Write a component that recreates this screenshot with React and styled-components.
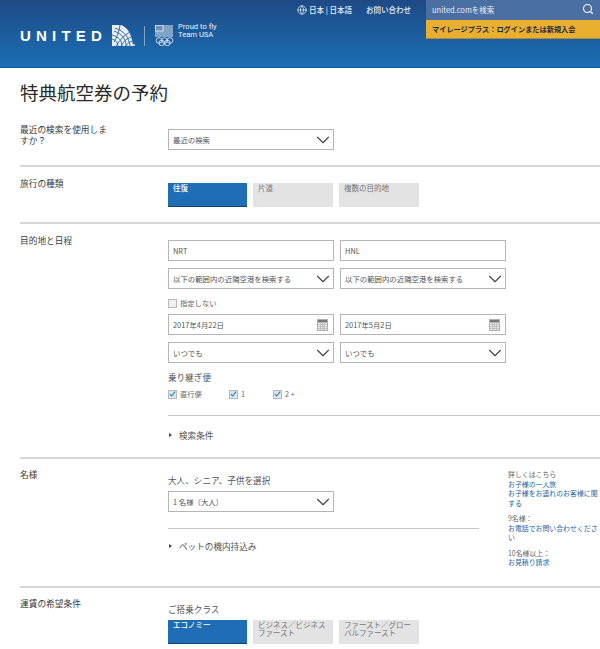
import React from "react";
import styled, { createGlobalStyle } from "styled-components";
import { ChevronDown, Search, Globe } from "lucide-react";

const GlobalStyle = createGlobalStyle`
    html, body {
        margin: 0;
        padding: 0;
        background: #fff;
    }
    body {
        font-family: "Noto Sans CJK JP", "Open Sans", sans-serif;
        color: #333;
        overflow: hidden;
    }
    * {
        box-sizing: border-box;
    }
`;

const Page = styled.div`
    width: 600px;
    height: 649px;
    overflow: hidden;
`;

const Header = styled.header`
    height: 68px;
    background: linear-gradient(180deg, #1e4a85 0%, #1b6fb5 100%);
    border-bottom: 1px solid #14598f;
    display: flex;
    justify-content: space-between;
    color: #fff;
`;

const LogoArea = styled.div`
    display: flex;
    align-items: center;
    padding: 25px 0 0 20px;
    height: 46px;
`;

const Wordmark = styled.div`
    font-family: "Liberation Sans", sans-serif;
    font-weight: 700;
    font-size: 15px;
    letter-spacing: 5.2px;
    margin-right: 5px;
    line-height: 16px;
`;

const LogoDivider = styled.div`
    width: 1px;
    height: 20px;
    background: #7fa3c9;
    margin: 0 10px 0 9px;
`;

const Tagline = styled.div`
    font-family: "Roboto", sans-serif;
    font-size: 7.6px;
    line-height: 7.6px;
    margin: -9px 0 0 4px;
    color: #eef3f9;
`;

const TopRight = styled.div`
    display: flex;
`;

const TopNav = styled.nav`
    display: flex;
    align-items: center;
    height: 19px;
    font-size: 7.5px;
    font-weight: 500;
    gap: 14px;
    margin-right: 15px;
    color: #e8eef6;
`;

const NavLocale = styled.span`
    display: flex;
    align-items: center;
    gap: 2px;
`;

const AccountBox = styled.div`
    width: 174px;
    display: flex;
    flex-direction: column;
`;

const SearchBar = styled.div`
    height: 20px;
    background: #4a6fa3;
    display: flex;
    align-items: center;
    justify-content: space-between;
    padding: 0 6px 2px 6px;
    font-size: 7.5px;
    color: #e6edf6;
`;

const MileageBar = styled.div`
    height: 19px;
    background: #e8b02e;
    color: #1f2a44;
    font-size: 7.2px;
    font-weight: 700;
    display: flex;
    align-items: center;
    padding-left: 6px;
    border-bottom: 1px solid #a98a3e;
`;

const Main = styled.main`
    padding-left: 20px;
`;

const Title = styled.h1`
    margin: 0;
    padding-top: 11px;
    height: 55px;
    font-size: 18.5px;
    line-height: 27px;
    font-weight: 400;
    color: #2a2a2a;
`;

const Section = styled.section`
    display: grid;
    grid-template-columns: 148px 1fr;
    height: ${(p) => p.$height}px;
    padding-top: ${(p) => p.$top}px;
    border-bottom: ${(p) => (p.$last ? "none" : "2px solid #d6d6d6")};
`;

const SectionLabel = styled.div`
    font-size: 8.7px;
    line-height: 10.5px;
    width: 90px;
    color: #3a3a3a;
    margin-top: ${(p) => p.$offset || 0}px;
`;

const Content = styled.div`
    display: flex;
    flex-direction: column;
    min-width: 0;
    padding-top: ${(p) => p.$top || 0}px;
`;

const SelectBox = styled.div`
    width: 166px;
    height: 21px;
    border: 1px solid #b5b5b5;
    background: #fff;
    display: flex;
    align-items: center;
    justify-content: space-between;
    padding: 0 4px;
    font-size: 7.4px;
    color: #555;
    flex: none;
    white-space: nowrap;
`;

const FieldRow = styled.div`
    display: flex;
    gap: 6px;
    margin-top: ${(p) => p.$top || 0}px;
    margin-bottom: ${(p) => p.$bottom || 7}px;
`;

const ToggleRow = styled.div`
    display: flex;
    gap: 6px;
`;

const Toggle = styled.div`
    width: ${(p) => (p.$active ? 79 : 80)}px;
    height: 24px;
    padding: ${(p) => (p.$wrap ? "1px 6px 0 5px" : "1px 5px")};
    background: ${(p) => (p.$active ? "#1f6db5" : "#e3e3e3")};
    border-bottom: ${(p) => (p.$active ? "1px solid #14406e" : "none")};
    color: ${(p) => (p.$active ? "#fff" : "#777")};
    font-size: 7.5px;
    line-height: 8.2px;
    font-weight: ${(p) => (p.$active ? 500 : 400)};
`;

const CheckRow = styled.div`
    display: flex;
    align-items: center;
    margin-top: ${(p) => p.$top || 0}px;
    margin-bottom: ${(p) => p.$bottom || 0}px;
`;

const CheckItem = styled.label`
    display: flex;
    align-items: center;
    gap: 3px;
    font-size: 7.3px;
    color: #666;
    width: ${(p) => p.$width || "auto"};
`;

const CheckBox = styled.span`
    width: 9px;
    height: 9px;
    border: 1px solid #b9b9b9;
    background: ${(p) => (p.$checked ? "#dbe6f0" : "#f0f0f0")};
    display: flex;
    align-items: center;
    justify-content: center;
    flex: none;
`;

const SubHeading = styled.div`
    font-size: 8.6px;
    line-height: 12px;
    color: #555;
    margin-bottom: ${(p) => p.$bottom || 0}px;
`;

const InnerRule = styled.div`
    height: 1px;
    background: #c8c8c8;
    width: ${(p) => p.$width};
    margin-top: ${(p) => p.$top || 0}px;
`;

const Expander = styled.div`
    display: flex;
    align-items: center;
    gap: 7px;
    font-size: 8.6px;
    color: #555;
    line-height: 12px;
    margin-top: ${(p) => p.$top}px;
`;

const Caret = styled.span`
    width: 0;
    height: 0;
    border-left: 3px solid #444;
    border-top: 2.5px solid transparent;
    border-bottom: 2.5px solid transparent;
    margin-left: 1px;
`;

const PassengerLayout = styled.div`
    display: grid;
    grid-template-columns: 340px 92px;
`;

const HelpColumn = styled.aside`
    font-size: 6.9px;
    line-height: 9.5px;
    color: #666;
`;

const HelpBlock = styled.div`
    margin-bottom: 6px;
`;

const HelpLink = styled.a`
    display: block;
    color: #1d5f9f;
`;

const SelectChevron = styled(ChevronDown)`
    margin-right: -5px;
    flex: none;
`;

const Chevron = () => <SelectChevron size={22} strokeWidth={1.2} color="#444" />;

const CalendarSvg = styled.svg`
    margin-right: 1px;
    flex: none;
`;

const CalendarIcon = () => (
    <CalendarSvg width="11" height="12" viewBox="0 0 11 12">
        <rect x="0.5" y="0.5" width="10" height="11" fill="#ececec" stroke="#b0b0b0" />
        <rect x="1" y="1" width="9" height="2.500" fill="#777" />
        <path d="M1 5.500h9M1 7.500h9M1 9.500h9M3.500 4v7M5.500 4v7M7.500 4v7" stroke="#b5b5b5" strokeWidth="0.7" />
    </CalendarSvg>
);

const Tick = () => (
    <svg width="8" height="8" viewBox="0 0 8 8">
        <path d="M1 4.200 3 6.300 7 1.300" fill="none" stroke="#2f78b8" strokeWidth="1.200" />
    </svg>
);

// globe square: the top right corner is cut by the curve of the globe
const GlobeLogo = () => (
    <svg width="23" height="21" viewBox="0 0 23 21">
        <defs>
            <clipPath id="globeCut">
                <path d="M0 0H9C15 2 20 9 21 21H0Z" />
            </clipPath>
        </defs>
        <path d="M0 0H9C15 2 20 9 21 21H0Z" fill="#e8eef5" />
        <g clipPath="url(#globeCut)" fill="none" stroke="#2a639f" strokeWidth="0.9">
            <path d="M18 21C17 12 12 6 3 3" />
            <path d="M14 21C14 14 10 9 2 6" />
            <path d="M10 21C10 16 7 12 0 10" />
            <path d="M6 21C6 18 4 15 0 14" />
            <path d="M4 21C8 15 12 10 18 7" />
            <path d="M9 21C11 17 15 13 20 12" />
            <path d="M14 21C15 19 17 17 21 16" />
            <path d="M2 17C5 12 7 7 8 0" />
        </g>
        <circle cx="22" cy="20" r="1" fill="#e8eef5" />
    </svg>
);

const FlagLogo = () => (
    <svg width="19" height="21" viewBox="0 0 19 21">
        <path d="M8 1h10M8 3h10M8 5h10M0 7h18M0 9h18M0 11h18" stroke="#e6edf5" strokeWidth="1" />
        <rect x="0.500" y="0.500" width="7.500" height="5.500" fill="#6f8fb8" stroke="#e6edf5" strokeWidth="0.8" />
        <g fill="none" stroke="#eef3f9" strokeWidth="0.8">
            <circle cx="4" cy="15.500" r="2.800" />
            <circle cx="9.500" cy="15.500" r="2.800" />
            <circle cx="15" cy="15.500" r="2.800" />
            <circle cx="6.700" cy="18" r="2.800" />
            <circle cx="12.300" cy="18" r="2.800" />
        </g>
    </svg>
);

function Select({ children }) {
    return (
        <SelectBox>
            <span>{children}</span>
            <Chevron />
        </SelectBox>
    );
}

function DateField({ children }) {
    return (
        <SelectBox>
            <span>{children}</span>
            <CalendarIcon />
        </SelectBox>
    );
}

function Check({ children, checked, width }) {
    return (
        <CheckItem $width={width}>
            <CheckBox $checked={checked}>{checked && <Tick />}</CheckBox>
            {children}
        </CheckItem>
    );
}

export default function App() {
    return (
        <Page>
            <GlobalStyle />
            <Header>
                <LogoArea>
                    <Wordmark>UNITED</Wordmark>
                    <GlobeLogo />
                    <LogoDivider />
                    <FlagLogo />
                    <Tagline>
                        Proud to fly
                        <br />
                        Team USA
                    </Tagline>
                </LogoArea>
                <TopRight>
                    <TopNav>
                        <NavLocale>
                            <Globe size={10} strokeWidth={1.5} color="#fff" />
                            日本 | 日本語
                        </NavLocale>
                        <span>お問い合わせ</span>
                    </TopNav>
                    <AccountBox>
                        <SearchBar>
                            united.comを検索
                            <Search size={12} strokeWidth={2.2} color="#fff" />
                        </SearchBar>
                        <MileageBar>マイレージプラス：ログインまたは新規入会</MileageBar>
                    </AccountBox>
                </TopRight>
            </Header>
            <Main>
                <Title>特典航空券の予約</Title>
                <Section $height={44} $top={0}>
                    <SectionLabel $offset={2}>最近の検索を使用しますか？</SectionLabel>
                    <Content $top={6}>
                        <Select>最近の検索</Select>
                    </Content>
                </Section>
                <Section $height={57} $top={16}>
                    <SectionLabel $offset={-4}>旅行の種類</SectionLabel>
                    <ToggleRow>
                        <Toggle $active>往復</Toggle>
                        <Toggle>片道</Toggle>
                        <Toggle>複数の目的地</Toggle>
                    </ToggleRow>
                </Section>
                <Section $height={235} $top={16}>
                    <SectionLabel $offset={-4}>目的地と日程</SectionLabel>
                    <Content>
                        <FieldRow>
                            <SelectBox>NRT</SelectBox>
                            <SelectBox>HNL</SelectBox>
                        </FieldRow>
                        <FieldRow>
                            <Select>以下の範囲内の近隣空港を検索する</Select>
                            <Select>以下の範囲内の近隣空港を検索する</Select>
                        </FieldRow>
                        <CheckRow $top={2}>
                            <Check>指定しない</Check>
                        </CheckRow>
                        <FieldRow $top={6}>
                            <DateField>2017年4月22日</DateField>
                            <DateField>2017年5月2日</DateField>
                        </FieldRow>
                        <FieldRow $bottom={8}>
                            <Select>いつでも</Select>
                            <Select>いつでも</Select>
                        </FieldRow>
                        <SubHeading>乗り継ぎ便</SubHeading>
                        <CheckRow $top={6} $bottom={16}>
                            <Check checked width="61px">直行便</Check>
                            <Check checked width="44px">1</Check>
                            <Check checked>2 +</Check>
                        </CheckRow>
                        <InnerRule $width="100%" />
                        <Expander $top={13}>
                            <Caret />
                            検索条件
                        </Expander>
                    </Content>
                </Section>
                <Section $height={129} $top={11}>
                    <SectionLabel>名様</SectionLabel>
                    <PassengerLayout>
                        <Content $top={4}>
                            <SubHeading $bottom={5}>大人、シニア、子供を選択</SubHeading>
                            <Select>1 名様（大人）</Select>
                            <InnerRule $width="311px" $top={16} />
                            <Expander $top={11}>
                                <Caret />
                                ペットの機内持込み
                            </Expander>
                        </Content>
                        <HelpColumn>
                            <HelpBlock>
                                詳しくはこちら
                                <HelpLink>お子様の一人旅</HelpLink>
                                <HelpLink>お子様をお連れのお客様に関する</HelpLink>
                            </HelpBlock>
                            <HelpBlock>
                                9名様：
                                <HelpLink>お電話でお問い合わせください</HelpLink>
                            </HelpBlock>
                            <HelpBlock>
                                10名様以上：
                                <HelpLink>お見積り請求</HelpLink>
                            </HelpBlock>
                        </HelpColumn>
                    </PassengerLayout>
                </Section>
                <Section $height={62} $top={11} $last>
                    <SectionLabel>運賃の希望条件</SectionLabel>
                    <Content $top={4}>
                        <SubHeading $bottom={5}>ご搭乗クラス</SubHeading>
                        <ToggleRow>
                            <Toggle $active>エコノミー</Toggle>
                            <Toggle $wrap>ビジネス／ビジネスファースト</Toggle>
                            <Toggle $wrap>ファースト／グローバルファースト</Toggle>
                        </ToggleRow>
                    </Content>
                </Section>
            </Main>
        </Page>
    );
}
